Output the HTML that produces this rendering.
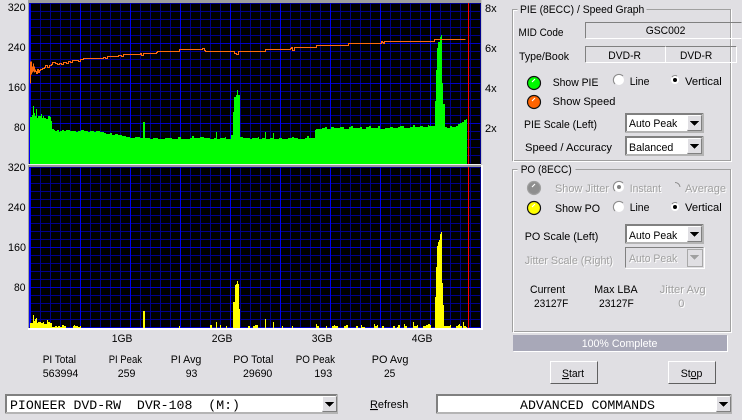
<!DOCTYPE html>
<html><head><meta charset="utf-8"><title>PIE/PO Graph</title>
<style>
html,body{margin:0;padding:0;background:#e0dfe3;width:742px;height:420px;overflow:hidden}
svg{display:block;position:absolute;left:0;top:0}
text{font-family:"Liberation Sans",sans-serif;font-size:11px;fill:#000}
.d{fill:#a0a0a0}.w{fill:#fff}
.mono{font-family:"Liberation Mono",monospace;font-size:13px}
.c{shape-rendering:crispEdges}
</style></head><body>
<svg width="742" height="420" viewBox="0 0 742 420">
<defs>
<g id="dd" class="c">
<rect x="0" y="0" width="79" height="20" fill="#fff"/>
<path fill="none" stroke="#808080" transform="translate(.5,.5)" d="M0 19V0H78M1 18V1H77"/>
<path fill="none" stroke="#b4b4b4" transform="translate(.5,.5)" d="M0 19H78V0M1 18H77V1"/>
<rect x="62" y="2" width="15" height="16" fill="#e0dfe3"/>
<path fill="none" stroke="#fff" transform="translate(.5,.5)" d="M62 16V2H75"/>
<path fill="none" stroke="#808080" transform="translate(.5,.5)" d="M62 17H76V2"/>
<path fill="#000" d="M65 8H74L69.500 13Z"/>
</g>
</defs>
<rect width="742" height="420" fill="#e0dfe3"/>
<g class="c">
<rect x="28" y="0" width="454" height="3" fill="#a0a0a0"/>
<rect x="28" y="0" width="2" height="330" fill="#a0a0a0"/>
<rect x="29" y="3" width="452" height="161" fill="#000"/>
<rect x="28" y="164" width="454" height="1" fill="#f0f0f0"/>
<rect x="28" y="165" width="454" height="2" fill="#9a9a9a"/>
<rect x="29" y="167" width="452" height="161" fill="#000"/>
<rect x="28" y="328" width="455" height="2" fill="#fff"/>
<rect x="481" y="165" width="2" height="165" fill="#fff"/>
<rect x="481" y="0" width="1" height="165" fill="#c8c8c8"/>
<g fill="none" stroke="#00008c" transform="translate(.5,.5)">
<path d="M29 3H480M29 11H480M29 19H480M29 27H480M29 35H480M29 51H480M29 59H480M29 67H480M29 75H480M29 91H480M29 99H480M29 107H480M29 115H480M29 131H480M29 139H480M29 147H480M29 155H480"/>
<path d="M40 3V163M50 3V163M60 3V163M70 3V163M90 3V163M100 3V163M110 3V163M120 3V163M140 3V163M150 3V163M160 3V163M170 3V163M190 3V163M200 3V163M210 3V163M220 3V163M240 3V163M250 3V163M260 3V163M270 3V163M290 3V163M300 3V163M310 3V163M320 3V163M340 3V163M350 3V163M360 3V163M370 3V163M390 3V163M400 3V163M410 3V163M420 3V163M440 3V163M450 3V163M460 3V163M470 3V163M480 3V163"/>
<path d="M29 167H480M29 175H480M29 183H480M29 191H480M29 199H480M29 215H480M29 223H480M29 231H480M29 239H480M29 255H480M29 263H480M29 271H480M29 279H480M29 295H480M29 303H480M29 311H480M29 319H480"/>
<path d="M40 167V327M50 167V327M60 167V327M70 167V327M90 167V327M100 167V327M110 167V327M120 167V327M140 167V327M150 167V327M160 167V327M170 167V327M190 167V327M200 167V327M210 167V327M220 167V327M240 167V327M250 167V327M260 167V327M270 167V327M290 167V327M300 167V327M310 167V327M320 167V327M340 167V327M350 167V327M360 167V327M370 167V327M390 167V327M400 167V327M410 167V327M420 167V327M440 167V327M450 167V327M460 167V327M470 167V327M480 167V327"/>
<g stroke="#0000c8">
<path d="M29 43H480M29 83H480M29 123H480M29 207H480M29 247H480M29 287H480M29 327H480"/>
</g>
<g stroke="#0000f0">
<path d="M29 3V163M30 3V163M80 3V163M130 3V163M180 3V163M230 3V163M280 3V163M330 3V163M380 3V163M430 3V163"/>
<path d="M29 167V327M30 167V327M80 167V327M130 167V327M180 167V327M230 167V327M280 167V327M330 167V327M380 167V327M430 167V327"/>
</g>
</g>
<path fill="#00ff00" d="M30 164V117H32V115H33V106H34V113H35V116H36V109H37V118H38V116H41V114H42V118H43V116H44V118H46V119H48V116H50V117H51V121H52V129H54V130H55V131H57V130H59V132H60V131H62V130H64V131H66V130H70V131H76V132H78V131H81V130H84V131H88V132H90V131H94V132H96V131H100V132H104V133H106V134H110V133H112V135H115V134H118V135H122V136H126V137H130V138H135V137H140V138H143V122H145V138H150V139H153V138H158V139H165V138H172V139H178V137H181V139H190V138H192V136H194V138H200V137H204V138H210V139H214V138H216V132H217V139H220V138H225V137H226V139H231V135H233V112H234V97H236V95H237V90H238V95H240V137H243V138H250V139H252V138H258V137H259V139H262V138H265V132H266V139H270V138H273V133H274V139H279V138H282V139H288V138H292V137H294V138H298V139H305V138H307V136H309V138H315V130H316V129H322V128H325V127H327V129H331V127H334V128H340V127H344V129H349V127H351V126H353V128H360V127H362V129H366V127H369V126H371V128H378V126H380V129H385V128H390V127H393V128H398V127H400V126H404V128H410V127H413V125H415V127H420V126H423V127H428V125H429V126H435V101H436V70H437V48H438V42H440V37H441V35H442V83H443V104H445V127H447V128H450V126H452V127H456V126H458V124H460V123H462V122H464V120H466V119H467V164Z"/>
<rect x="468" y="3" width="1" height="161" fill="#f00"/>
<rect x="468" y="167" width="1" height="161" fill="#f00"/>
<path fill="#ffff00" d="M30 328V323H33V315H34V321H35V319H36V318H37V323H38V322H41V323H43V322H44V324H47V320H48V322H50V323H52V327H55V326H57V327H58V326H60V327H62V325H64V326H66V328ZM73 328V326H74V325H75V326H78V327H80V326H81V328ZM143 328V311H145V328ZM179 328V326H180V328ZM210 328V325H212V328ZM216 328V322H217V328ZM220 328V325H221V328ZM226 328V326H227V328ZM233 328V302H235V285H236V284H237V281H238V284H239V309H240V328ZM248 328V326H250V328ZM253 328V326H255V325H258V328ZM265 328V319H266V328ZM273 328V322H274V328ZM282 328V326H283V328ZM292 328V326H293V328ZM316 328V324H317V326H319V328ZM326 328V326H327V328ZM332 328V326H334V325H335V326H338V328ZM344 328V326H346V325H348V328ZM356 328V326H358V328ZM361 328V325H362V327H365V328ZM374 328V324H375V326H377V325H378V328ZM382 328V326H384V328ZM393 328V326H395V328ZM397 328V327H398V325H400V328ZM404 328V324H405V326H407V328ZM413 328V322H414V326H417V325H418V328ZM423 328V326H426V325H428V324H430V325H431V328ZM435 328V297H436V267H437V246H438V242H439V240H440V234H441V232H442V283H443V305H444V326H450V325H451V328ZM456 328V326H458V325H459V324H460V326H462V328ZM463 328V322H464V326H466V327H467V328Z"/>
</g>
<g fill="none" stroke="#ff6a10" stroke-width="1" class="c" transform="translate(.5,.5)">
<path d="M30 61V83M31 61V74M32 66V72M33 63V71M34 66V72M35 69V71H36V73H37V69H38V72H39V70H40V69H42V68H44V67H45V65H47V67H49V65H51V64H52V62H55V63H57V64H59V63H61V64H63V62H66V63H68V61H70V62H72V60H78V61H80V59H83V58H103V57H105V58H107V56H118V55H121V56H123V54H140V53H141V55H143V53H156V52H157V51H159V51H179V49H202V48H204V50H205V51H234V53H236V54H238V51H250V51H265V49H290V48H291V47H292V50H294V47H316V45H318V45H348V43H381V41H382V42H383V43H384V41H434V39H465"/>
</g>
<g class="c" fill="none" transform="translate(.5,.5)">
<path stroke="#a0a0a0" d="M517 9H512V160H730V9H646"/>
<path stroke="#fff" d="M517 10H513V161H731V9"/>
<path stroke="#a0a0a0" d="M517 169H512V331H730V169H575"/>
<path stroke="#fff" d="M517 170H513V332H731V169"/>
</g>
<rect x="518" y="5" width="128" height="12" fill="#e0dfe3"/>
<rect x="518" y="164" width="56" height="10" fill="#e0dfe3"/>
<g class="c" fill="none" transform="translate(.5,.5)">
<path stroke="#808080" d="M585 38V22H741"/><path stroke="#fff" d="M585 38H741"/>
<path stroke="#808080" d="M585 62V46H736"/><path stroke="#fff" d="M585 62H736V46M665 46V62"/>
</g>
<g lengthAdjust="spacingAndGlyphs">
<text x="7.700" y="11" textLength="18" lengthAdjust="spacingAndGlyphs">320</text><text x="7.700" y="51" textLength="18" lengthAdjust="spacingAndGlyphs">240</text><text x="8" y="91" textLength="18" lengthAdjust="spacingAndGlyphs">160</text><text x="14" y="131" textLength="11.500" lengthAdjust="spacingAndGlyphs">80</text>
<text x="7.700" y="171" textLength="18" lengthAdjust="spacingAndGlyphs">320</text><text x="7.700" y="211" textLength="18" lengthAdjust="spacingAndGlyphs">240</text><text x="8" y="251" textLength="18" lengthAdjust="spacingAndGlyphs">160</text><text x="14" y="291" textLength="11.500" lengthAdjust="spacingAndGlyphs">80</text>
<text x="485" y="12">8x</text><text x="485" y="52">6x</text><text x="485" y="92">4x</text><text x="485" y="132">2x</text>
<text x="111.700" y="342" textLength="20.700" lengthAdjust="spacingAndGlyphs">1GB</text><text x="211.700" y="342" textLength="20.700" lengthAdjust="spacingAndGlyphs">2GB</text><text x="311.700" y="342" textLength="20.700" lengthAdjust="spacingAndGlyphs">3GB</text><text x="411.700" y="342" textLength="20.700" lengthAdjust="spacingAndGlyphs">4GB</text>
<text x="42.700" y="363" textLength="33.300" lengthAdjust="spacingAndGlyphs">PI Total</text><text x="42.700" y="377" textLength="35.700" lengthAdjust="spacingAndGlyphs">563994</text>
<text x="108.700" y="363" textLength="33.300" lengthAdjust="spacingAndGlyphs">PI Peak</text><text x="117.700" y="377" textLength="17.700" lengthAdjust="spacingAndGlyphs">259</text>
<text x="170.700" y="363" textLength="30.700" lengthAdjust="spacingAndGlyphs">PI Avg</text><text x="185.700" y="377" textLength="11.700" lengthAdjust="spacingAndGlyphs">93</text>
<text x="233.300" y="363" textLength="40" lengthAdjust="spacingAndGlyphs">PO Total</text><text x="243" y="377" textLength="29.300" lengthAdjust="spacingAndGlyphs">29690</text>
<text x="295.700" y="363" textLength="39.300" lengthAdjust="spacingAndGlyphs">PO Peak</text><text x="314.300" y="377" textLength="18" lengthAdjust="spacingAndGlyphs">193</text>
<text x="371.700" y="363" textLength="36.700" lengthAdjust="spacingAndGlyphs">PO Avg</text><text x="384" y="377" textLength="11.300" lengthAdjust="spacingAndGlyphs">25</text>

<text x="520" y="13" textLength="124.300" lengthAdjust="spacingAndGlyphs">PIE (8ECC) / Speed Graph</text>
<text x="518.500" y="36" textLength="45" lengthAdjust="spacingAndGlyphs">MID Code</text>
<text x="519" y="60" textLength="50" lengthAdjust="spacingAndGlyphs">Type/Book</text>
<text x="645.700" y="34" textLength="39.700" lengthAdjust="spacingAndGlyphs">GSC002</text>
<text x="608.300" y="59" textLength="32.700" lengthAdjust="spacingAndGlyphs">DVD-R</text><text x="680" y="59" textLength="32.300" lengthAdjust="spacingAndGlyphs">DVD-R</text>
<text x="552.700" y="86" textLength="45.700" lengthAdjust="spacingAndGlyphs">Show PIE</text>
<text x="552.700" y="105" textLength="62.700" lengthAdjust="spacingAndGlyphs">Show Speed</text>
<text x="629.700" y="85" textLength="19.700" lengthAdjust="spacingAndGlyphs">Line</text><text x="685" y="85" textLength="36.700" lengthAdjust="spacingAndGlyphs">Vertical</text>
<text x="524" y="128" textLength="73" lengthAdjust="spacingAndGlyphs">PIE Scale (Left)</text>
<text x="525" y="151" textLength="87" lengthAdjust="spacingAndGlyphs">Speed / Accuracy</text>

<text x="520.700" y="173" textLength="51" lengthAdjust="spacingAndGlyphs">PO (8ECC)</text>
<text x="556" y="193" class="w" textLength="54" lengthAdjust="spacingAndGlyphs">Show Jitter</text><text x="555" y="192" class="d" textLength="54" lengthAdjust="spacingAndGlyphs">Show Jitter</text>
<text x="630.700" y="193" class="w" textLength="31.300" lengthAdjust="spacingAndGlyphs">Instant</text><text x="629.700" y="192" class="d" textLength="31.300" lengthAdjust="spacingAndGlyphs">Instant</text>
<text x="686" y="193" class="w" textLength="41" lengthAdjust="spacingAndGlyphs">Average</text><text x="685" y="192" class="d" textLength="41" lengthAdjust="spacingAndGlyphs">Average</text>
<text x="555" y="212" textLength="45" lengthAdjust="spacingAndGlyphs">Show PO</text>
<text x="629.700" y="211" textLength="19.700" lengthAdjust="spacingAndGlyphs">Line</text><text x="685" y="211" textLength="36.700" lengthAdjust="spacingAndGlyphs">Vertical</text>
<text x="524.700" y="240" textLength="73.700" lengthAdjust="spacingAndGlyphs">PO Scale (Left)</text>
<text x="525.700" y="265" class="w" textLength="88.300" lengthAdjust="spacingAndGlyphs">Jitter Scale (Right)</text><text x="524.700" y="264" class="d" textLength="88.300" lengthAdjust="spacingAndGlyphs">Jitter Scale (Right)</text>
<text x="530" y="293" textLength="35" lengthAdjust="spacingAndGlyphs">Current</text><text x="594.300" y="293" textLength="43.300" lengthAdjust="spacingAndGlyphs">Max LBA</text>
<text x="660.700" y="294" class="w" textLength="46" lengthAdjust="spacingAndGlyphs">Jitter Avg</text><text x="659.700" y="293" class="d" textLength="46" lengthAdjust="spacingAndGlyphs">Jitter Avg</text>
<text x="534" y="307" textLength="34.300" lengthAdjust="spacingAndGlyphs">23127F</text><text x="599" y="307" textLength="34.700" lengthAdjust="spacingAndGlyphs">23127F</text>
<text x="679.300" y="308" class="w">0</text><text x="678.300" y="307" class="d">0</text>
</g>
<g stroke="#101010" stroke-width="1.200">
<circle cx="534" cy="83" r="6.500" fill="#00f800"/>
<circle cx="534" cy="102" r="6.500" fill="#ff6400"/>
<circle cx="534" cy="188" r="6.500" fill="#8e8e8e" stroke="#a0a0a0"/>
<circle cx="534" cy="208" r="6.500" fill="#ffff00"/>
</g>
<g stroke="#fff" stroke-width="1.200" fill="none">
<path d="M532 82L535 79M532 101L535 98M532 187L535 184M532 207L535 204"/>
</g>
<g fill="#fff" stroke="none">
<circle cx="619" cy="80" r="5"/><circle cx="675" cy="80" r="4"/>
<circle cx="619" cy="207" r="5"/><circle cx="675" cy="207" r="4"/>
<circle cx="619" cy="187" r="5"/>
</g>
<g fill="none" stroke="#8a8a8a">
<path d="M615 84A5.500 5.500 0 0 1 623 76M615 211A5.500 5.500 0 0 1 623 203M615 191A5.500 5.500 0 0 1 623 183"/>
<path d="M672 77A4 4 0 0 1 677 76M672 204A4 4 0 0 1 677 203"/>
<path d="M675 182.500A5 5 0 0 1 680 187"/>
</g>
<circle cx="675" cy="80" r="2" fill="#000"/><circle cx="675" cy="207" r="2" fill="#000"/><circle cx="619" cy="187" r="2" fill="#808080"/>
<use href="#dd" x="625" y="113"/>
<use href="#dd" x="625" y="136"/>
<use href="#dd" x="625" y="224"/>
<g class="c">
<path fill="none" stroke="#808080" transform="translate(.5,.5)" d="M625 267V247H703"/>
<path fill="none" stroke="#fff" transform="translate(.5,.5)" d="M625 268H704V247"/>
<rect x="687" y="249" width="15" height="17" fill="#e0dfe3"/>
<path fill="none" stroke="#a8a8a8" transform="translate(.5,.5)" d="M687 266V249H702V266Z"/>
<path fill="#a0a0a0" d="M690 255H699L694.500 260Z"/>
<rect x="513" y="335" width="214" height="16" fill="#a8a8b8"/>
<path fill="none" stroke="#fff" transform="translate(.5,.5)" d="M513 351H727V335"/>
<g fill="none" transform="translate(.5,.5)">
<path stroke="#fff" d="M550 383V361H597"/><path stroke="#606060" d="M550 383H597V361"/>
<path stroke="#fff" d="M668 383V361H715"/><path stroke="#606060" d="M668 383H715V361"/>
</g>
<rect x="5" y="394" width="333" height="20" fill="#fff"/>
<path fill="none" stroke="#808080" transform="translate(.5,.5)" d="M5 413V394H337M6 412V395H336"/>
<path fill="none" stroke="#b4b4b4" transform="translate(.5,.5)" d="M5 413H337V394M6 412H336V395"/>
<rect x="322" y="396" width="15" height="16" fill="#e0dfe3"/>
<path fill="none" stroke="#fff" transform="translate(.5,.5)" d="M322 410V396H335"/>
<path fill="none" stroke="#808080" transform="translate(.5,.5)" d="M322 411H336V396"/>
<path fill="#000" d="M325 402H334L329.500 407Z"/>
<rect x="436" y="394" width="296" height="20" fill="#fff"/>
<path fill="none" stroke="#808080" transform="translate(.5,.5)" d="M436 413V394H731M437 412V395H730"/>
<path fill="none" stroke="#b4b4b4" transform="translate(.5,.5)" d="M436 413H731V394M437 412H730V395"/>
<rect x="716" y="396" width="15" height="16" fill="#e0dfe3"/>
<path fill="none" stroke="#fff" transform="translate(.5,.5)" d="M716 410V396H729"/>
<path fill="none" stroke="#808080" transform="translate(.5,.5)" d="M716 411H730V396"/>
<path fill="#000" d="M719 402H728L723.500 407Z"/>
</g>
<text x="629" y="127" textLength="48.300" lengthAdjust="spacingAndGlyphs">Auto Peak</text>
<text x="629" y="151" textLength="44.300" lengthAdjust="spacingAndGlyphs">Balanced</text>
<text x="629" y="239" textLength="48.300" lengthAdjust="spacingAndGlyphs">Auto Peak</text>
<text x="630" y="263" class="w" textLength="48.300" lengthAdjust="spacingAndGlyphs">Auto Peak</text><text x="629" y="262" class="d" textLength="48.300" lengthAdjust="spacingAndGlyphs">Auto Peak</text>
<text x="581.700" y="347" class="w" textLength="75.700" lengthAdjust="spacingAndGlyphs">100% Complete</text>
<text x="562" y="377" textLength="22" lengthAdjust="spacingAndGlyphs"><tspan text-decoration="underline">S</tspan>tart</text>
<text x="680.700" y="377" textLength="21.700" lengthAdjust="spacingAndGlyphs">St<tspan text-decoration="underline">o</tspan>p</text>
<text x="370" y="408" textLength="38.300" lengthAdjust="spacingAndGlyphs"><tspan text-decoration="underline">R</tspan>efresh</text>
<text x="10" y="409" class="mono" xml:space="preserve" textLength="230" lengthAdjust="spacingAndGlyphs">PIONEER DVD-RW  DVR-108  (M:)</text>
<text x="520" y="409" class="mono" textLength="135" lengthAdjust="spacingAndGlyphs">ADVANCED COMMANDS</text>
</svg>
</body></html>
